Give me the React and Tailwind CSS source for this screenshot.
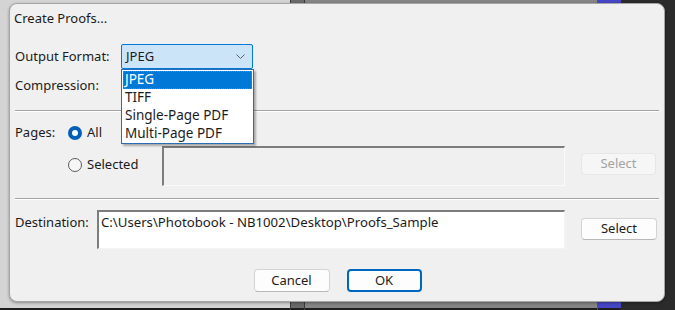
import React from "react";

function Radio({ checked }) {
  return checked ? (
    <span className="w-[14px] h-[14px] rounded-full bg-[#005fb8] flex items-center justify-center shrink-0">
      <span className="w-[6px] h-[6px] rounded-full bg-white" />
    </span>
  ) : (
    <span className="w-[14px] h-[14px] rounded-full border border-[#5c5c5c] bg-[#f6f6f6] shrink-0" />
  );
}

function Sep() {
  return <div className="h-[2px] border-t border-[#a3a3a3] border-b border-b-white" />;
}

export default function App() {
  const font = { fontFamily: '"Noto Sans", "Open Sans", sans-serif' };
  return (
    <div
      className="relative w-[675px] h-[310px] overflow-hidden flex text-[13px] text-[#1b1b1b]"
      style={font}
    >
      {/* background window */}
      <div className="w-[290px] h-full flex flex-col">
        <div className="flex-1 bg-[#d4d4d4]" />
        <div className="h-[2px] bg-[#1e1e1e]" />
      </div>
      <div className="w-[15px] h-full flex flex-col border-x border-[#3a3a3a]">
        <div className="flex-1 bg-[#6a6a6a]" />
        <div className="h-[2px] bg-[#1e1e1e]" />
      </div>
      <div className="w-[292px] h-full flex flex-col">
        <div className="flex-1 bg-[#858585]" />
        <div className="h-[2px] bg-[#1e1e1e]" />
      </div>
      <div className="w-[1px] h-full bg-[#c02828]" />
      <div className="w-[23px] h-full flex flex-col">
        <div className="flex-1 bg-[#4646c4]" />
        <div className="h-[2px] bg-[#1e1e1e]" />
      </div>
      <div className="flex-1 h-full bg-[#2b2b2b]" />

      {/* dialog */}
      <div className="absolute left-[9px] top-[3px] w-[656px] h-[299px] rounded-[8px] bg-[#f0f0f0] border border-[#a6a6a6] shadow-[0_1px_3px_rgba(0,0,0,0.35)] flex flex-col">
        <div className="h-[28px] pl-[4px] pt-[5px] leading-[18px]">Create Proofs...</div>

        <div className="pl-[5px] pr-[4px] flex flex-col">
          {/* Output format */}
          <div className="mt-[12px] h-[25px] flex items-center">
            <div className="w-[106px]">Output Format:</div>
            <div className="relative">
              <div className="w-[132px] h-[25px] bg-[#cce4f7] border border-[#0078d4] rounded-[2px] flex items-center pl-[4px] pr-[7px]">
                <span className="flex-1">JPEG</span>
                <svg width="9" height="5" viewBox="0 0 9 5" fill="none">
                  <path d="M0.5 0.5 L4.5 4.5 L8.5 0.5" stroke="#606060" strokeWidth="1" />
                </svg>
              </div>
              {/* open list */}
              <div className="absolute left-0 top-[25px] w-[133px] bg-white border border-[#2a6db4] shadow-[2px_2px_2px_rgba(0,0,0,0.3)] p-[1px] z-10 leading-[17px] text-[13.5px]">
                <div className="h-[17.5px] bg-[#0078d7] text-white pl-[2px] outline-1 outline-dotted outline-[#b07030] -outline-offset-1">
                  JPEG
                </div>
                <div className="h-[18px] pl-[2px]">TIFF</div>
                <div className="h-[18px] pl-[2px]">Single-Page PDF</div>
                <div className="h-[17.5px] pl-[2px]">Multi-Page PDF</div>
              </div>
            </div>
          </div>

          {/* compression */}
          <div className="mt-[3px] h-[28px] flex items-center">Compression:</div>

          <div className="mt-[10px] mr-[1px]">
            <Sep />
          </div>

          {/* pages */}
          <div className="mt-[9px] h-[24px] flex items-center">
            <div className="w-[53px]">Pages:</div>
            <div className="flex items-center gap-[5px]">
              <Radio checked />
              <span>All</span>
            </div>
          </div>
          <div className="mt-[1px] h-[40px] flex items-start">
            <div className="w-[53px]" />
            <div className="w-[94px] pt-[9px] flex items-center gap-[5px]">
              <Radio />
              <span>Selected</span>
            </div>
            <div className="w-[403px] h-[40px] bg-[#f0f0f0] border-l-2 border-t-2 border-l-[#7d7d7d] border-t-[#7d7d7d] border-r border-b border-r-[#fafafa] border-b-[#fafafa]" />
            <div className="ml-[16px] mt-[7px] w-[75px] h-[22px] rounded-[4px] bg-[#f6f6f6] border border-[#e6e6e6] text-[#a3a3a3] flex items-center justify-center">
              Select
            </div>
          </div>

          <div className="mt-[12px] mr-[1px]">
            <Sep />
          </div>

          {/* destination */}
          <div className="mt-[10px] h-[39px] flex items-start">
            <div className="w-[82px] pt-[3px]">Destination:</div>
            <div className="w-[468px] h-[39px] bg-white border-l-2 border-t-2 border-l-[#7d7d7d] border-t-[#7d7d7d] border-r border-b border-r-[#f4f4f4] border-b-[#f4f4f4] pl-[2px] pt-[1px] leading-[18px] text-[13.2px]">
              C:\Users\Photobook - NB1002\Desktop\Proofs_Sample
            </div>
            <div className="ml-[16px] mt-[8px] w-[76px] h-[22px] rounded-[4px] bg-[#fdfdfd] border border-[#d3d3d3] border-b-[#b8b8b8] flex items-center justify-center">
              Select
            </div>
          </div>

          {/* buttons */}
          <div className="mt-[20px] flex justify-center gap-[17px]">
            <div className="w-[76px] h-[23px] rounded-[4px] bg-[#fdfdfd] border border-[#d3d3d3] border-b-[#b8b8b8] flex items-center justify-center">
              Cancel
            </div>
            <div className="w-[75px] h-[23px] rounded-[4px] bg-[#fdfdfd] border-2 border-[#0067c0] flex items-center justify-center">
              OK
            </div>
          </div>
        </div>
      </div>
    </div>
  );
}
